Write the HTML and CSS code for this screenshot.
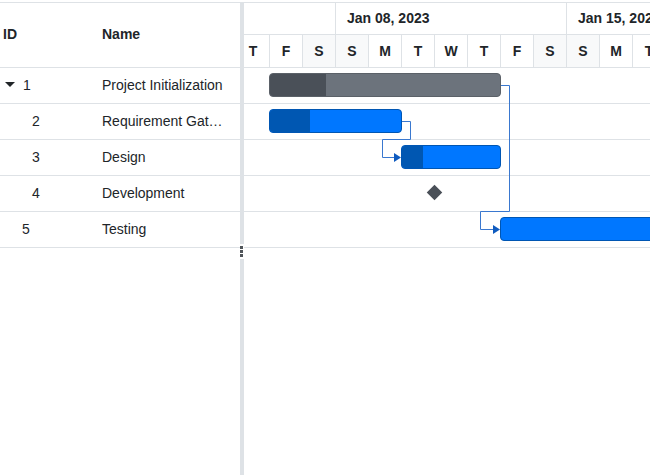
FILE: index.html
```html
<!DOCTYPE html>
<html>
<head>
<meta charset="utf-8">
<link rel="stylesheet" href="styles.css">
</head>
<body>
<div class="gantt">
  <div class="grid">
    <div class="grid-head">
      <div class="c-id head-id">ID</div>
      <div class="c-name">Name</div>
    </div>
    <div class="grid-row">
      <div class="c-id lvl-parent"><span class="caret"></span><span>1</span></div>
      <div class="c-name">Project Initialization</div>
    </div>
    <div class="grid-row">
      <div class="c-id lvl-child">2</div>
      <div class="c-name">Requirement Gathering</div>
    </div>
    <div class="grid-row">
      <div class="c-id lvl-child">3</div>
      <div class="c-name">Design</div>
    </div>
    <div class="grid-row">
      <div class="c-id lvl-child">4</div>
      <div class="c-name">Development</div>
    </div>
    <div class="grid-row">
      <div class="c-id lvl-root">5</div>
      <div class="c-name">Testing</div>
    </div>
  </div>
  <div class="splitter">
    <div class="grip"><i></i><i></i><i></i></div>
  </div>
  <div class="chart">
    <div class="tl-top">
      <div class="week"></div>
      <div class="week">Jan 08, 2023</div>
      <div class="week">Jan 15, 2023</div>
    </div>
    <div class="tl-days">
      <div class="day">T</div>
      <div class="day">F</div>
      <div class="day we">S</div>
      <div class="day we">S</div>
      <div class="day">M</div>
      <div class="day">T</div>
      <div class="day">W</div>
      <div class="day">T</div>
      <div class="day">F</div>
      <div class="day we">S</div>
      <div class="day we">S</div>
      <div class="day">M</div>
      <div class="day">T</div>
    </div>
    <div class="chart-body">
      <div class="c-row"></div>
      <div class="c-row"></div>
      <div class="c-row"></div>
      <div class="c-row"></div>
      <div class="c-row"></div>
      <div class="bar summary" style="left:25px;top:5px;width:232px"><div class="prog" style="width:56px"></div></div>
      <div class="bar task" style="left:25px;top:41px;width:133px"><div class="prog" style="width:40px"></div></div>
      <div class="bar task" style="left:157px;top:77px;width:100px"><div class="prog" style="width:21px"></div></div>
      <div class="milestone" style="left:185px;top:119px"></div>
      <div class="bar task" style="left:256px;top:149px;width:220px"></div>
      <svg class="links" width="410" height="180" viewBox="0 0 410 180">
        <path d="M158 53.5 H166.5 V71.5 H138.5 V89.5 H151" />
        <polygon points="150,85 157,89.5 150,94" />
        <path d="M257 17.5 H265.5 V143.5 H236.5 V161.5 H250" />
        <polygon points="249,157 256,161.5 249,166" />
      </svg>
    </div>
  </div>
</div>
</body>
</html>
```

FILE: styles.css
```css
* { box-sizing: border-box; }
html, body { margin: 0; background: #fff; }
body {
  padding-top: 2px;
  font-family: "Liberation Sans", Arial, sans-serif;
  font-size: 14px;
  color: #212529;
  overflow: hidden;
}
.gantt {
  display: flex;
  height: 473px;
  border-top: 1px solid #dee2e6;
}
.grid {
  width: 240px;
  flex: none;
}
.grid-head {
  display: flex;
  align-items: center;
  height: 65px;
  border-bottom: 1px solid #dee2e6;
  font-weight: bold;
  padding-bottom: 3px;
}
.grid-row {
  display: flex;
  align-items: center;
  height: 36px;
  border-bottom: 1px solid #dee2e6;
  padding-bottom: 2px;
}
.c-id {
  width: 90px;
  flex: none;
  display: flex;
  align-items: center;
}
.head-id { padding-left: 3px; }
.lvl-parent { padding-left: 5px; }
.lvl-child { padding-left: 32px; }
.lvl-root { padding-left: 22px; }
.caret {
  width: 0;
  height: 0;
  border-left: 5px solid transparent;
  border-right: 5px solid transparent;
  border-top: 5px solid #212529;
  margin-right: 8px;
}
.c-name {
  flex: 1;
  min-width: 0;
  padding: 0 12px;
  white-space: nowrap;
  overflow: hidden;
  text-overflow: ellipsis;
}
.splitter {
  width: 4px;
  flex: none;
  background: #dee2e6;
  position: relative;
}
.grip {
  position: absolute;
  left: 0;
  top: 241px;
  width: 4px;
  height: 15px;
  background: #fff;
  display: flex;
  flex-direction: column;
  align-items: flex-start;
  gap: 1px;
  padding-top: 2px;
}
.grip i {
  display: block;
  width: 3px;
  height: 3px;
  background: #50555a;
}
.chart {
  flex: 1;
  min-width: 0;
  overflow: hidden;
}
.tl-top {
  display: flex;
  height: 32px;
  border-bottom: 1px solid #dee2e6;
  margin-left: -139px;
}
.week {
  flex: none;
  width: 231px;
  border-right: 1px solid #dee2e6;
  font-weight: bold;
  display: flex;
  align-items: center;
  padding-left: 11px;
  padding-bottom: 1px;
  white-space: nowrap;
}
.tl-days {
  display: flex;
  height: 33px;
  border-bottom: 1px solid #dee2e6;
  margin-left: -7px;
}
.day {
  flex: none;
  width: 33px;
  border-right: 1px solid #dee2e6;
  font-weight: bold;
  display: flex;
  align-items: center;
  justify-content: center;
  padding-bottom: 1px;
}
.day.we { background: #f8f9fa; }
.chart-body {
  position: relative;
}
.c-row {
  height: 36px;
  border-bottom: 1px solid #dee2e6;
}
.bar {
  position: absolute;
  height: 24px;
  border-radius: 4px;
  overflow: hidden;
}
.bar .prog { height: 100%; }
.summary {
  background: #6c737c;
  border: 1px solid #5b6168;
}
.summary .prog { background: #4a5058; }
.task {
  background: #0077ff;
  border: 1px solid #0056b3;
}
.task .prog { background: #0057b2; }
.milestone {
  position: absolute;
  width: 11px;
  height: 11px;
  background: #4a5058;
  transform: rotate(45deg);
}
.links {
  position: absolute;
  left: 0;
  top: 0;
  overflow: visible;
}
.links path {
  fill: none;
  stroke: #3a78cf;
  stroke-width: 1;
}
.links polygon {
  fill: #0f5bbf;
}
```
